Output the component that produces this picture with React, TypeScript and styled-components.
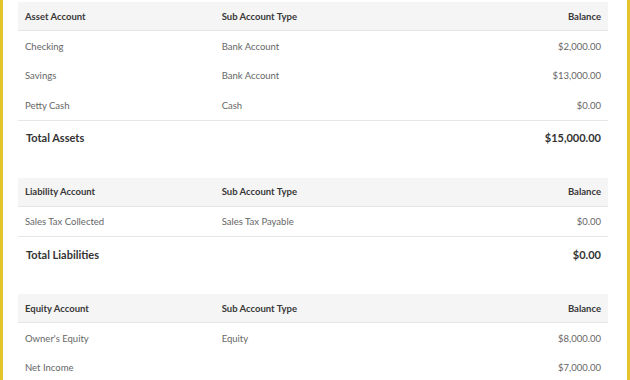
import styled, { createGlobalStyle } from 'styled-components'

const GlobalStyle = createGlobalStyle`
  html, body {
    margin: 0;
    padding: 0;
    background: #fff;
  }
  body {
    font-family: Lato, 'Liberation Sans', sans-serif;
  }
`

const Page = styled.div`
  box-sizing: border-box;
  height: 380px;
  overflow: hidden;
  border-left: 3px solid #e3c42d;
  border-right: 3px solid #e3c42d;
  padding: 2px 19px 0 15px;
  display: flex;
  flex-direction: column;
  gap: 23px;
`

const Table = styled.table`
  width: 100%;
  border-collapse: collapse;
  table-layout: fixed;
  th,
  td {
    padding: 0 7px;
    white-space: nowrap;
  }
  th:first-child,
  td:first-child {
    width: calc(33.3% - 14px);
  }
  th:last-child,
  td:last-child {
    text-align: right;
  }
`

const HeadRow = styled.tr`
  background: #f5f5f5;
  border-bottom: 1px solid #e6e6e6;
  > th {
    height: 28px;
    font-size: 9.5px;
    font-weight: 700;
    color: #383838;
    text-align: left;
  }
`

const Row = styled.tr`
  > td {
    height: 28.5px;
    padding-top: 1px;
    font-size: 9.5px;
    color: #666;
  }
`

const TotalRow = styled.tr`
  border-top: 1px solid #e6e6e6;
  > td {
    height: 34px;
    font-size: 11px;
    font-weight: 700;
    color: #333;
  }
  > td:first-child {
    padding-left: 8px;
  }
`

type Line = { name: string; type: string; balance: string }
type Section = { title: string; lines: Line[]; total?: { label: string; amount: string } }

const sections: Section[] = [
  {
    title: 'Asset Account',
    lines: [
      { name: 'Checking', type: 'Bank Account', balance: '$2,000.00' },
      { name: 'Savings', type: 'Bank Account', balance: '$13,000.00' },
      { name: 'Petty Cash', type: 'Cash', balance: '$0.00' },
    ],
    total: { label: 'Total Assets', amount: '$15,000.00' },
  },
  {
    title: 'Liability Account',
    lines: [{ name: 'Sales Tax Collected', type: 'Sales Tax Payable', balance: '$0.00' }],
    total: { label: 'Total Liabilities', amount: '$0.00' },
  },
  {
    title: 'Equity Account',
    lines: [
      { name: "Owner's Equity", type: 'Equity', balance: '$8,000.00' },
      { name: 'Net Income', type: '', balance: '$7,000.00' },
    ],
  },
]

function App() {
  return (
    <Page>
      <GlobalStyle />
      {sections.map((s) => (
        <Table key={s.title}>
          <thead>
            <HeadRow>
              <th>{s.title}</th>
              <th>Sub Account Type</th>
              <th>Balance</th>
            </HeadRow>
          </thead>
          <tbody>
            {s.lines.map((l) => (
              <Row key={l.name}>
                <td>{l.name}</td>
                <td>{l.type}</td>
                <td>{l.balance}</td>
              </Row>
            ))}
            {s.total && (
              <TotalRow>
                <td>{s.total.label}</td>
                <td></td>
                <td>{s.total.amount}</td>
              </TotalRow>
            )}
          </tbody>
        </Table>
      ))}
    </Page>
  )
}
export default App
